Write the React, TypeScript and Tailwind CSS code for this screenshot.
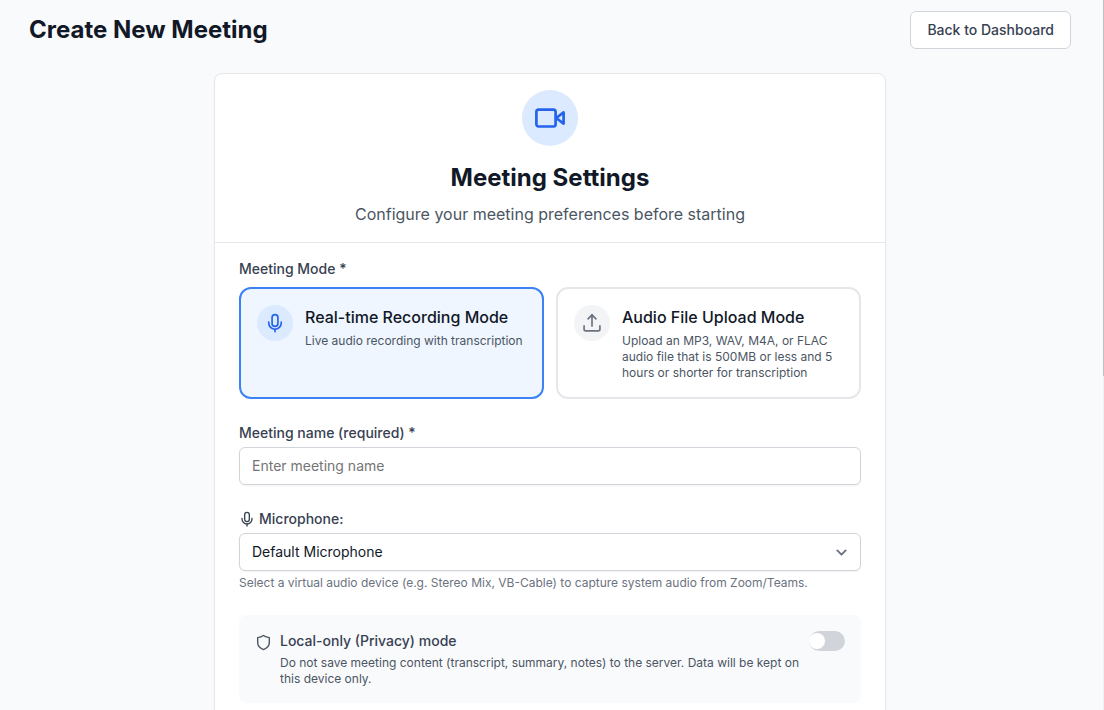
import { useState } from "react";

type IconProps = { className?: string };

function VideoIcon({ className }: IconProps) {
  return (
    <svg viewBox="0 0 32 32" fill="none" stroke="currentColor" strokeWidth="2.7" strokeLinecap="round" strokeLinejoin="round" className={className} aria-hidden="true">
      <rect x="2.400" y="7.700" width="19.200" height="16.800" rx="2.200" />
      <path d="M22.200 16 29.600 10.400V21.600Z" />
    </svg>
  );
}

function MicIcon({ className }: IconProps) {
  return (
    <svg viewBox="0 0 24 24" fill="none" stroke="currentColor" strokeWidth="2" strokeLinecap="round" strokeLinejoin="round" className={className} aria-hidden="true">
      <rect x="8.500" y="2" width="7" height="14" rx="3.500" />
      <path d="M19.500 11v1a7.500 7.500 0 0 1-15 0v-1" />
      <path d="M12 19.500V22.500" />
    </svg>
  );
}

function UploadIcon({ className }: IconProps) {
  return (
    <svg viewBox="0 0 24 24" fill="none" stroke="currentColor" strokeWidth="2" strokeLinecap="round" strokeLinejoin="round" className={className} aria-hidden="true">
      <path d="M2.500 15.500v4a2 2 0 0 0 2 2h15a2 2 0 0 0 2-2v-4" />
      <path d="M7.300 7 12 2.300 16.700 7" />
      <path d="M12 2.300V15.500" />
    </svg>
  );
}

function ShieldIcon({ className }: IconProps) {
  return (
    <svg viewBox="0 0 24 24" fill="none" stroke="currentColor" strokeWidth="2" strokeLinecap="round" strokeLinejoin="round" className={className} aria-hidden="true">
      <path d="M12 2.200c2.300 1.800 5 2.700 8.200 2.900v7.200c0 4.700-3.400 7.700-8.200 9.700-4.800-2-8.200-5-8.200-9.700V5.100C7 4.900 9.700 4 12 2.200Z" />
    </svg>
  );
}

function ChevronIcon({ className }: IconProps) {
  return (
    <svg viewBox="0 0 16 16" fill="none" stroke="currentColor" strokeWidth="1.900" strokeLinecap="round" strokeLinejoin="round" className={className} aria-hidden="true">
      <path d="m4.300 6.400 4.200 4.200 4.200-4.200" />
    </svg>
  );
}

const modes = [
  {
    id: "realtime",
    title: "Real-time Recording Mode",
    text: "Live audio recording with transcription",
    Icon: MicIcon,
  },
  {
    id: "upload",
    title: "Audio File Upload Mode",
    text: "Upload an MP3, WAV, M4A, or FLAC audio file that is 500MB or less and 5 hours or shorter for transcription",
    Icon: UploadIcon,
  },
];

export default function App() {
  const [mode, setMode] = useState("realtime");
  const [name, setName] = useState("");
  const [local, setLocal] = useState(false);

  return (
    <div className="relative h-screen overflow-hidden bg-[#f9fafb] pr-1 font-['Inter',sans-serif] text-[#111827]">
      <header className="flex items-center justify-between px-[29px] pt-[11px]">
        <h1 className="text-2xl font-bold">Create New Meeting</h1>
        <button type="button" className="rounded-md border border-[#d1d5db] bg-white px-4 py-2 text-sm font-medium text-[#374151]">
          Back to Dashboard
        </button>
      </header>

      <main className="mx-auto mt-6 max-w-2xl rounded-lg border border-[#e5e7eb] bg-white shadow-xs">
        <div className="flex flex-col items-center border-b border-[#e5e7eb] px-6 py-4 text-center">
          <div className="flex size-14 items-center justify-center rounded-full bg-[#dbeafe] text-[#2563eb]">
            <VideoIcon className="size-8" />
          </div>
          <h2 className="mt-4 text-2xl font-bold">Meeting Settings</h2>
          <p className="mt-2 text-base text-[#4b5563]">Configure your meeting preferences before starting</p>
        </div>

        <form className="flex flex-col gap-6 px-6 py-4" onSubmit={(e) => e.preventDefault()}>
          <div role="group" aria-labelledby="mode-label">
            <div id="mode-label" className="text-sm font-medium text-[#374151]">Meeting Mode *</div>
            <div className="mt-2 grid grid-cols-2 gap-3">
              {modes.map(({ id, title, text, Icon }) => {
                const active = mode === id;
                return (
                  <button
                    key={id}
                    type="button"
                    aria-pressed={active}
                    onClick={() => setMode(id)}
                    className={`flex items-start gap-3 rounded-xl border-2 p-4 text-left ${active ? "border-[#3b82f6] bg-[#eff6ff]" : "border-[#e5e7eb] bg-white"}`}
                  >
                    <span className={`flex size-9 shrink-0 items-center justify-center rounded-full ${active ? "bg-[#dbeafe] text-[#2563eb]" : "bg-[#f3f4f6] text-[#6b7280]"}`}>
                      <Icon className="size-5" />
                    </span>
                    <span className="flex flex-col gap-1">
                      <span className="text-base font-medium">{title}</span>
                      <span className="text-xs text-[#4b5563]">{text}</span>
                    </span>
                  </button>
                );
              })}
            </div>
          </div>

          <div className="flex flex-col gap-1">
            <label htmlFor="meeting-name" className="text-sm font-medium text-[#374151]">Meeting name (required) *</label>
            <input
              id="meeting-name"
              type="text"
              value={name}
              onChange={(e) => setName(e.target.value)}
              placeholder="Enter meeting name"
              className="w-full rounded-md border border-[#d1d5db] bg-white px-3 py-2 text-sm shadow-xs placeholder:text-[#757575]"
            />
          </div>

          <div className="flex flex-col gap-1">
            <label htmlFor="microphone" className="flex items-center gap-1 text-sm font-medium text-[#374151]">
              <MicIcon className="size-4" />
              Microphone:
            </label>
            <div className="relative">
              <select id="microphone" className="block w-full appearance-none rounded-md border border-[#d1d5db] bg-white py-2 pr-10 pl-3 text-sm shadow-xs">
                <option>Default Microphone</option>
              </select>
              <ChevronIcon className="pointer-events-none absolute inset-y-0 right-3 my-auto size-4 text-[#6b7280]" />
            </div>
            <p className="text-xs text-[#6b7280]">Select a virtual audio device (e.g. Stereo Mix, VB-Cable) to capture system audio from Zoom/Teams.</p>
          </div>

          <div className="flex items-start justify-between gap-2 rounded-lg bg-[#f9fafb] p-4">
            <div className="flex items-start gap-2">
              <ShieldIcon className="mt-[3px] size-[17px] shrink-0 text-[#4b5563]" />
              <div className="flex flex-col gap-1">
                <label htmlFor="local-mode" className="text-sm font-medium text-[#374151]">Local-only (Privacy) mode</label>
                <p className="text-xs text-[#4b5563]">Do not save meeting content (transcript, summary, notes) to the server. Data will be kept on this device only.</p>
              </div>
            </div>
            <input
              id="local-mode"
              type="checkbox"
              role="switch"
              checked={local}
              onChange={(e) => setLocal(e.target.checked)}
              className="flex h-5 w-9 shrink-0 appearance-none items-center rounded-full bg-[#d1d5db] before:size-4 before:rounded-full before:bg-white checked:justify-end checked:bg-[#2563eb]"
            />
          </div>
        </form>
      </main>

      <div aria-hidden="true" className="absolute inset-y-0 right-0 w-px bg-[#f1f1f1]">
        <div className="h-[53%] bg-[#c1c1c1]" />
      </div>
    </div>
  );
}
